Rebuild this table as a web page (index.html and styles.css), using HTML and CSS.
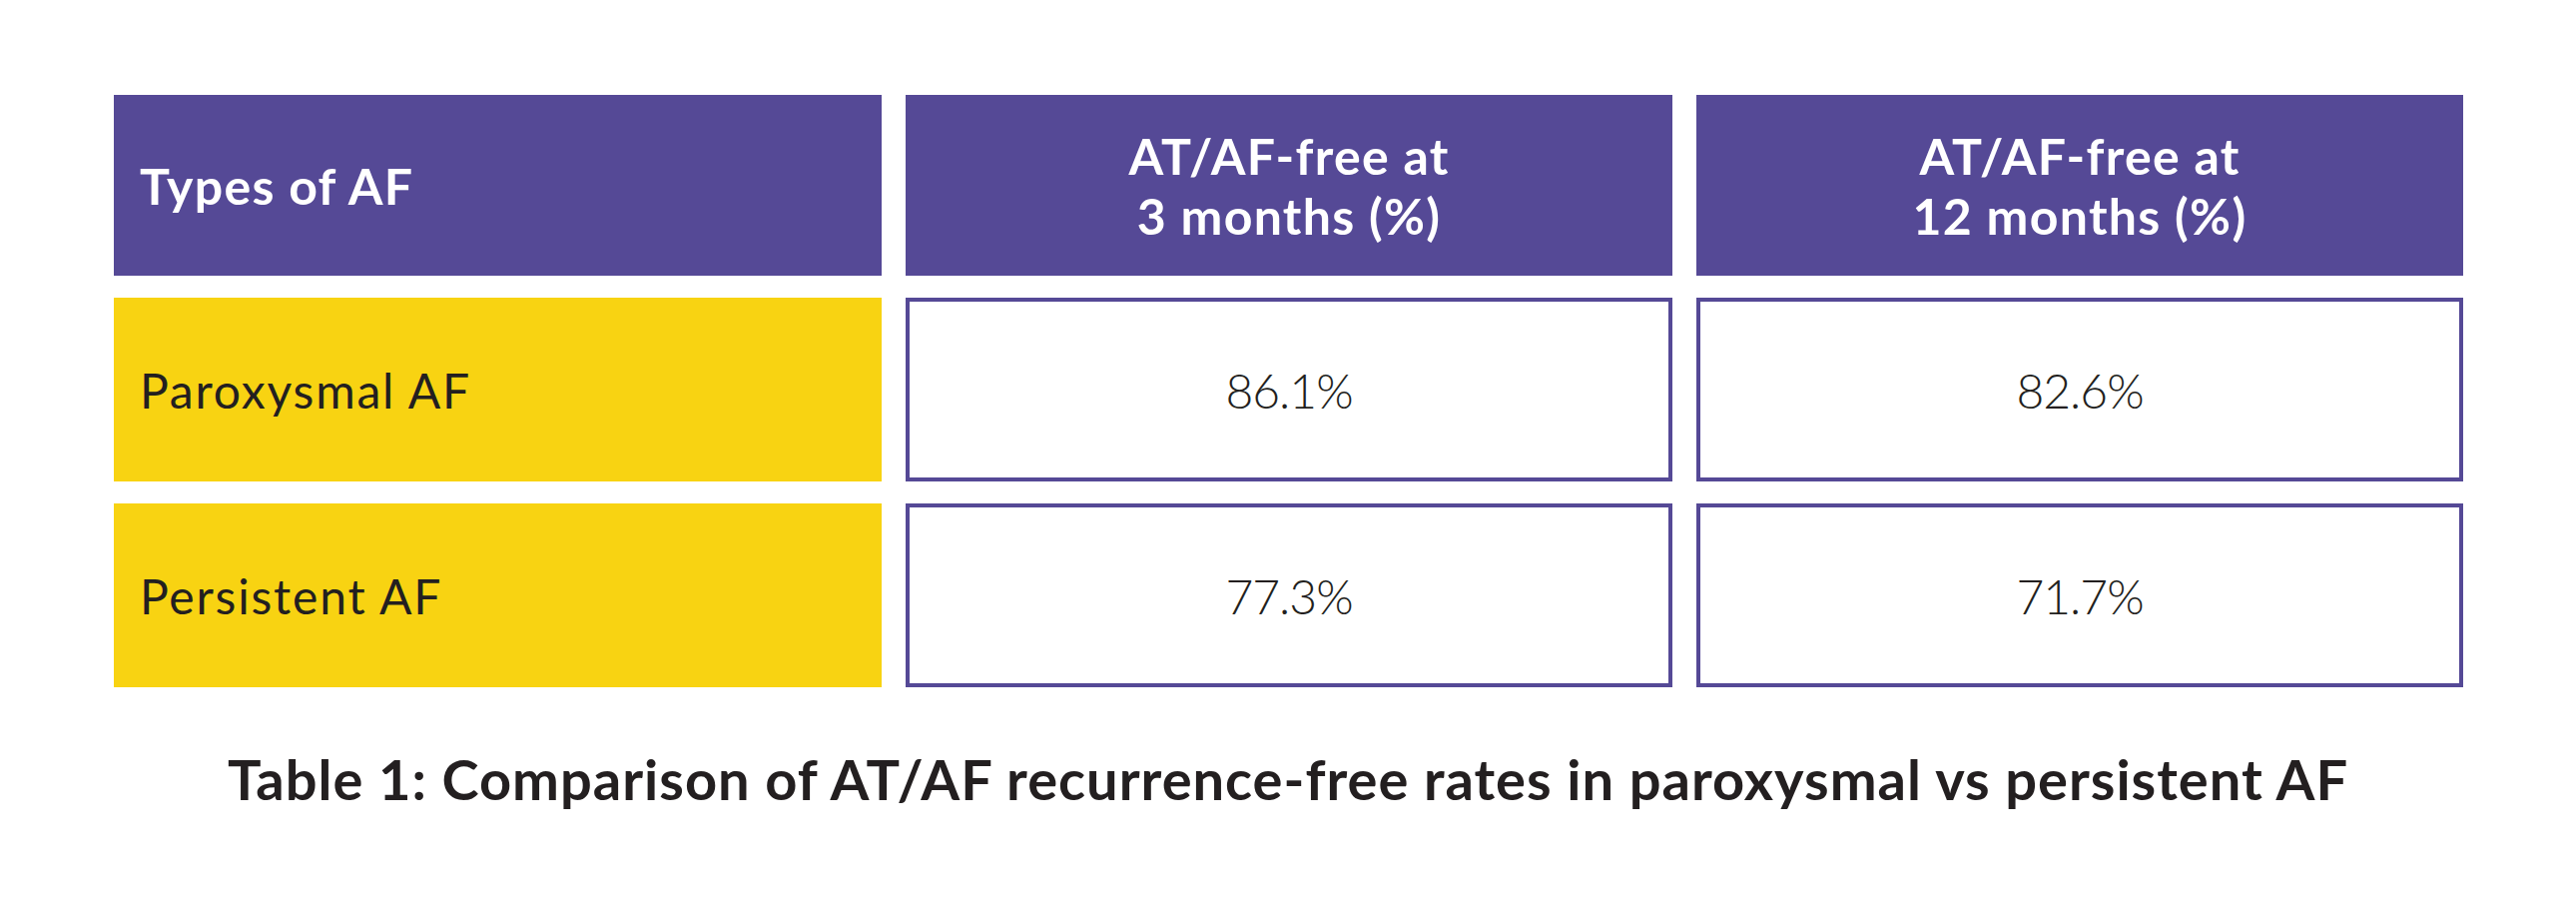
FILE: index.html
```html
<!DOCTYPE html>
<html lang="en">
<head>
<meta charset="utf-8">
<title>Table 1: Comparison of AT/AF recurrence-free rates</title>
<link rel="stylesheet" href="styles.css">
</head>
<body>
<main class="page">
  <div class="af-table">
    <div class="cell head head-left">Types of AF</div>
    <div class="cell head">AT/AF-free at<br>3 months (%)</div>
    <div class="cell head">AT/AF-free at<br>12 months (%)</div>

    <div class="cell type">Paroxysmal AF</div>
    <div class="cell value">86.1%</div>
    <div class="cell value">82.6%</div>

    <div class="cell type">Persistent AF</div>
    <div class="cell value">77.3%</div>
    <div class="cell value">71.7%</div>
  </div>
  <p class="caption">Table 1: Comparison of AT/AF recurrence-free rates in paroxysmal vs persistent AF</p>
</main>
</body>
</html>
```

FILE: styles.css
```css
html, body {
  margin: 0;
  padding: 0;
  background: #ffffff;
}

body {
  font-family: "Lato", "Open Sans", "Liberation Sans", sans-serif;
  color: #231f20;
}

.page {
  width: 2580px;
  height: 909px;
  padding-top: 95px;
  box-sizing: border-box;
  display: flex;
  flex-direction: column;
  align-items: center;
}

.af-table {
  display: grid;
  grid-template-columns: 769px 768px 768px;
  grid-template-rows: 181px 184px 184px;
  column-gap: 24px;
  row-gap: 22px;
  margin-left: 1px;
}

.cell {
  display: flex;
  align-items: center;
  box-sizing: border-box;
}

.head {
  background: #554996;
  color: #ffffff;
  font-weight: 700;
  font-size: 50px;
  line-height: 60px;
  justify-content: center;
  text-align: center;
  letter-spacing: 1.3px;
}

.head-left {
  justify-content: flex-start;
  text-align: left;
  padding-left: 26px;
}

.type {
  background: #f8d312;
  font-weight: 400;
  font-size: 48px;
  padding-left: 26px;
  letter-spacing: 1.8px;
}

.value {
  border: 4px solid #554996;
  background: #ffffff;
  font-weight: 300;
  font-size: 48px;
  justify-content: center;
  letter-spacing: -1px;
}

.caption {
  margin: 58px 0 0 0;
  font-weight: 700;
  font-size: 56px;
  line-height: 68px;
  text-align: center;
  letter-spacing: 1px;
  color: #231f20;
}
```
